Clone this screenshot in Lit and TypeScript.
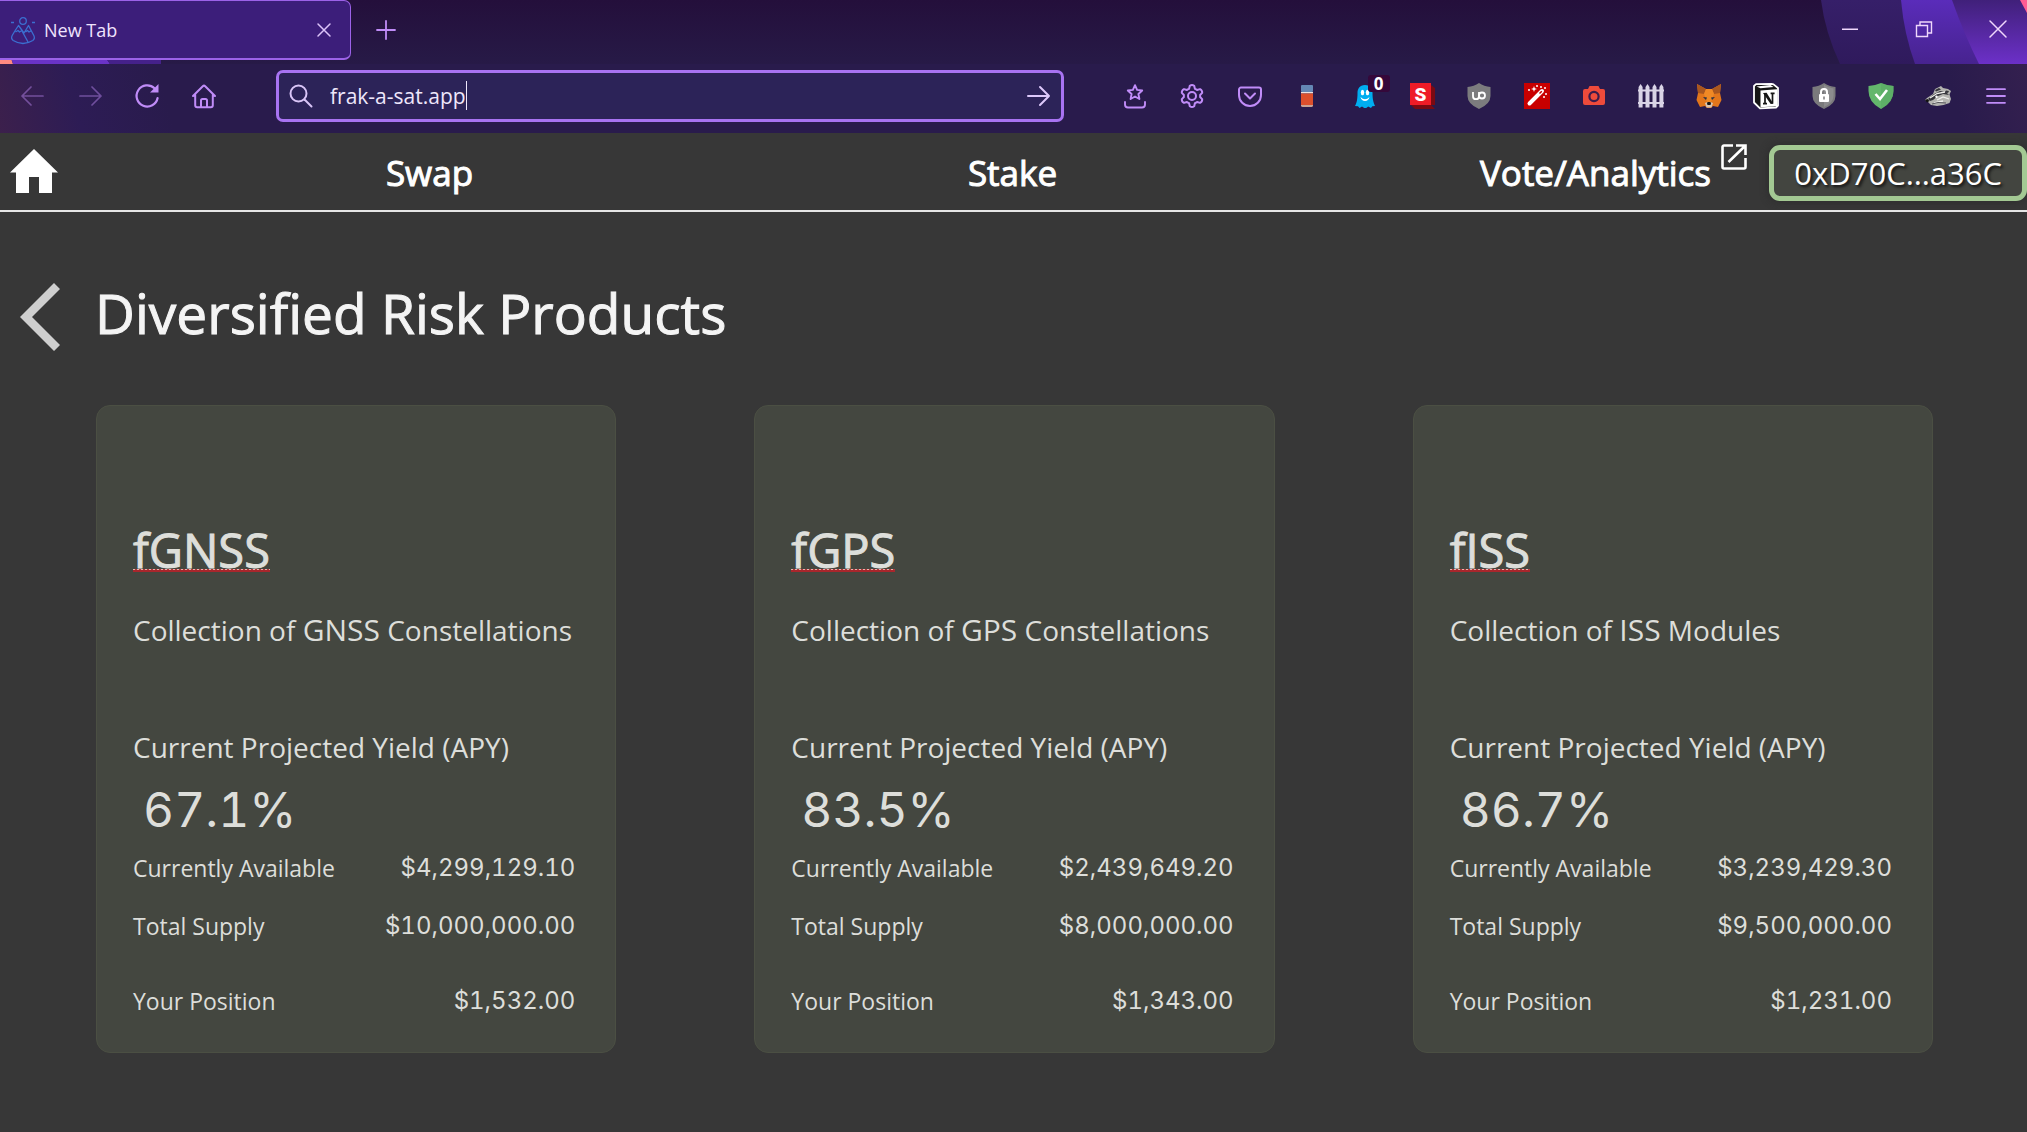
import { LitElement, html, css, svg, TemplateResult } from "lit";
import { customElement, property } from "lit/decorators.js";

interface Product {
  name: string;
  lead: string;
  code: string;
  tail: string;
  apy: string;
  available: string;
  supply: string;
  position: string;
}

const PRODUCTS: Product[] = [
  { name: "fGNSS", lead: "Collection of ", code: "GNSS", tail: " Constellations", apy: "67.1%", available: "$4,299,129.10", supply: "$10,000,000.00", position: "$1,532.00" },
  { name: "fGPS", lead: "Collection of ", code: "GPS", tail: " Constellations", apy: "83.5%", available: "$2,439,649.20", supply: "$8,000,000.00", position: "$1,343.00" },
  { name: "fISS", lead: "Collection of ", code: "ISS", tail: " Modules", apy: "86.7%", available: "$3,239,429.30", supply: "$9,500,000.00", position: "$1,231.00" },
];

const line = (body: TemplateResult, width = 2) => svg`<g fill="none" stroke="currentColor" stroke-width=${width} stroke-linecap="round" stroke-linejoin="round">${body}</g>`;

const ICONS: Record<string, TemplateResult> = {
  back: line(svg`<path d="M23 13H2M11 4 2 13l9 9"/>`, 1.7),
  forward: line(svg`<path d="M3 13h21M15 4l9 9-9 9"/>`, 1.7),
  reload: svg`<path d="M23.6 15A10.600 10.600 0 1 1 20.500 5.300" fill="none" stroke="currentColor" stroke-width="2.2" stroke-linecap="round"/><path d="M24.5 1v8.5H16z" fill="currentColor"/>`,
  home: line(svg`<path d="M2 13 11.8 3.2a1.7 1.7 0 0 1 2.4 0L24 13M4.2 11v11.2a2 2 0 0 0 2 2h13.6a2 2 0 0 0 2-2V11M10 24v-6.500a1.500 1.500 0 0 1 1.500-1.500h3a1.500 1.500 0 0 1 1.500 1.500V24"/>`, 2),
  search: line(svg`<circle cx="10.500" cy="10.500" r="8"/><path d="m16.500 16.500 7 7"/>`, 2),
  go: line(svg`<path d="M2 13h21M14 4l9 9-9 9"/>`, 2),
  starTray: line(svg`<path d="m13 2.200 2.100 4.700 5.100.6-3.800 3.500 1 5-4.400-2.500L8.600 16l1-5-3.800-3.500 5.100-.6zM3 19v2.500a3 3 0 0 0 3 3h14a3 3 0 0 0 3-3V19"/>`, 1.9),
  gear: line(svg`<circle cx="13" cy="13" r="4"/><path d="M10.800 2.800q2.200-1.600 4.400 0l.7 2.900q1.300.5 2.200 1.300l2.900-.9q2.400 1.100 2.200 3.800L21.100 12q.2 1 0 2l2.100 2.100q.2 2.700-2.200 3.800l-2.900-.9q-.9.800-2.200 1.300l-.7 2.900q-2.200 1.600-4.400 0l-.7-2.900q-1.300-.5-2.200-1.300L5 19.900q-2.400-1.100-2.200-3.800L4.900 14q-.2-1 0-2L2.800 9.900Q2.600 7.200 5 6.100l2.900.9q.9-.8 2.200-1.300z"/>`, 2),
  pocket: line(svg`<path d="M4 4.500h18a2 2 0 0 1 2 2V12a11 11 0 0 1-22 0V6.500a2 2 0 0 1 2-2zM8 10.500l5 5 5-5"/>`, 2),
  eraser: svg`<rect x="7" y="2" width="12" height="7" rx="1" fill="#6487b4"/><path d="M7 9h12v1.500H7z" fill="#efe2df"/><path d="M7 10.500h12V22a1 1 0 0 1-1 1H8a1 1 0 0 1-1-1z" fill="#dc4f2c"/><path d="M7 22h12v1q-.5 1-1.500 1h-9Q7.500 24 7 23z" fill="#c9a394"/>`,
  ghost: svg`<path d="M13 2C7.500 2 5.500 6 5.500 10c0 6-.6 9.500-2.500 13l3 .3 1.500 1.700 2.500-1.500 2.200 1.500h2l2-1.500 2.800 1.500 1.300-1.800 2.700-.2c-1.700-4-2.500-7-2.500-13 0-4-2-8-7.500-8z" fill="#00aef0"/><ellipse cx="10.500" cy="9.500" rx="1.700" ry="2.800" fill="#fff"/><ellipse cx="15.500" cy="9.500" rx="1.700" ry="2.800" fill="#fff"/><path d="M8.500 14q4.500 4.500 9 0-1 4-4.500 4t-4.500-4z" fill="#fff"/>`,
  letterS: svg`<path d="M5 22h21V5l-4-3v20l4 4H6l-4-4z" fill="#7a0a12"/><path d="M1 0h21v22H1z" fill="#ee1c27"/><text x="11.500" y="18" text-anchor="middle" font-family="Roboto, sans-serif" font-weight="900" font-size="19" fill="#fff">S</text>`,
  ublock: svg`<path d="M13 0q5 3.500 11.500 4v9q0 8-11.500 13Q1.500 21 1.500 13V4Q8 3.500 13 0z" fill="#7c7c7e"/><path d="M7 9v4.200a3 3 0 0 0 6 0V9" fill="none" stroke="#fff" stroke-width="1.800"/><circle cx="16" cy="12.500" r="3" fill="none" stroke="#fff" stroke-width="1.800"/>`,
  wand: svg`<path d="M0 0h26v26H0z" fill="#c80000"/><path d="M5.500 20.500 18 8" stroke="#fff" stroke-width="4" stroke-linecap="round"/><path d="m15.500 10.500 2.300-2.300" stroke="#c80000" stroke-width="1.500"/><g fill="#fff"><circle cx="5" cy="7" r="1"/><path d="m10 3 .8 2.200L13 6l-2.200.8L10 9l-.8-2.200L7 6l2.200-.8z"/><circle cx="13" cy="3" r="1"/><circle cx="17" cy="4" r="1"/><circle cx="21" cy="5" r="1"/><circle cx="22" cy="11" r="1"/><circle cx="20" cy="14" r="1"/></g>`,
  camera: svg`<path d="M8.500 3h9l1.500 3h3a2 2 0 0 1 2 2v12a2 2 0 0 1-2 2H4a2 2 0 0 1-2-2V8a2 2 0 0 1 2-2h3z" fill="#ee4b3b"/><circle cx="13" cy="13.500" r="4.600" fill="none" stroke="#3b1c4c" stroke-width="2.200"/>`,
  fence: svg`<g fill="#d9d4e6"><path d="M.6 24.500V4l2-3 2 3v20.500zM7.500 24.500V4l2-3 2 3v20.500zM14.500 24.500V4l2-3 2 3v20.500zM21.400 24.500V4l2-3 2 3v20.500z"/><path d="M0 6.500h26v2H0zM0 19h26v2H0z"/></g>`,
  fox: svg`<path d="m1 1 9 5h6l9-5-1 9 1.500 7L22 24l-5-1-2 2h-4l-2-2-5 1-3.500-7L2 10z" fill="#e2761b"/><path d="m1 1 9 5-2 5-6-1zM25 1l-9 5 2 5 6-1z" fill="#a9571f"/><path d="m10 6-2 5 3 8h4l3-8-2-5z" fill="#f08a25"/><path d="m7 14 4 .5-1 2.500zM19 14l-4 .5 1 2.500z" fill="#293044"/><path d="m9 20 2.500-1h3l2.500 1-1.500 4.500h-5z" fill="#d8c4b0"/><path d="m11 20.500.5-1.500h3l.5 1.500-.5 1.500h-3z" fill="#161616"/>`,
  notion: svg`<path d="M3 1.200 18.500.8l2 .6L25 5v17.500l-2 2L7 25.300 1 19.500V3z" fill="#151515" stroke="#fff" stroke-width="1.800" stroke-linejoin="round"/><path d="M7.500 7.500 24 6.300v17L7.500 24.200z" fill="#fff"/><path d="m3.500 3.500 14-1.500 3 2-13 1.200z" fill="#fff"/><path d="M10 20.700h4M12 20.700V11M19.500 20.500V10.300M17.600 10.300h4" stroke="#151515" stroke-width="1.700"/><path d="m10 10 3.600-.2 6.700 11-2.600.2z" fill="#151515"/>`,
  lock: svg`<path d="M13 0q5 3.500 11.500 4v9q0 8-11.500 13Q1.500 21 1.500 13V4Q8 3.500 13 0z" fill="#7a7a7c"/><path d="M13 2q5 3 9.500 3.500V13q0 6.500-9.500 11z" fill="#8c8c8e"/><rect x="8" y="11" width="10" height="8" rx="1" fill="#fff"/><path d="M10 11.500V9a3 3 0 0 1 6 0v2.500" fill="none" stroke="#fff" stroke-width="2"/><path d="M13 13.500v3" stroke="#7a7a7c" stroke-width="1.500"/>`,
  guard: svg`<path d="M13 0q6 2.600 12.500 3v5q0 11.500-12.500 18Q.5 19.500.5 8V3Q7 2.600 13 0z" fill="#63b76c"/><path d="M13 0q6 2.600 12.500 3v5q0 11.500-12.500 18z" fill="#57a862" opacity=".5"/><path d="m7.500 11 4.500 5 7-9" fill="none" stroke="#fff" stroke-width="2.600"/>`,
  badger: svg`<path d="m0 17 2-2 6-4 2-5 6-3 2 2 5 1 3 2-1.500 3.500L26 16l-1.500 4-6 2L12 23l-6-1-3-3z" fill="#b4b4b0"/><path d="m3 16 6-5 6-3 6 1 3 3-6-1-5 2-5 4-3 1zM10 7l4-2 2 1.500-5 2zM21 7.500l3 .5-1 2-3-1z" fill="#34343a"/><path d="m0 17 2.500-1 2 2-2.500 1.500z" fill="#111"/><path d="m5 15 7-4.500 8-1.500M12 17l6-3 6 2M9 20l9-2" fill="none" stroke="#efefec" stroke-width="1.300"/><circle cx="11.500" cy="13.800" r="1.200" fill="#fff"/><path d="m7 21 6-1.500 8 .5" fill="none" stroke="#55555a"/>`,
  menu: line(svg`<path d="M4 6.200h18M4 13h18M4 19.800h18"/>`, 1.8),
  peaks: svg`<g fill="none" stroke="#3b6fd0" stroke-width="1.300" stroke-linejoin="round"><circle cx="13" cy="4" r="3.300"/><path d="M5.500 13 2.200 18.500a4 4 0 0 0 1 5Q13 29.500 22.800 23.500a4 4 0 0 0 1-5L18.500 8.500 14 16 8.500 8.500zM5.500 15l2.500-1.500 1.500 1.500 2.500-1.500M15.500 15l2-1.500 1.500 1.500 2.500-1.500M12 14l6 11"/><path d="M1 5.500h3M22 5.500h3"/></g>`,
  close: line(svg`<path d="m7 7 12 12M19 7 7 19"/>`, 1.5),
  plus: line(svg`<path d="M13 4v18M4 13h18"/>`, 1.8),
  minimize: svg`<path d="M5 12.500h16v1.500H5z" fill="currentColor"/>`,
  restore: svg`<path d="M5.500 9.500h11v11h-11zM9 9V6h11.500v11H17" fill="none" stroke="currentColor" stroke-width="1.400"/>`,
  exit: line(svg`<path d="m5 5 16 16M21 5 5 21"/>`, 1.5),
};

@customElement("line-icon")
export class LineIcon extends LitElement {
  @property() name = "menu";

  static styles = css`
    :host { display: block; width: 26px; height: 26px; }
    .glyph { display: block; width: 100%; height: 100%; overflow: visible; }
  `;

  render() {
    return html`<svg class="glyph" viewBox="0 0 26 26" aria-hidden="true">${ICONS[this.name]}</svg>`;
  }
}

const buttonReset = css`
  button { display: block; margin: 0; padding: 0; border: 0; background: none; color: inherit; font: inherit; cursor: pointer; }
`;

@customElement("browser-chrome")
export class BrowserChrome extends LitElement {
  static styles = [
    buttonReset,
    css`
      :host { display: block; color: #c08cf8; font-family: "Open Sans", "Noto Sans", sans-serif; }
      .strip { position: relative; display: flex; align-items: flex-start; height: 64px; background: linear-gradient(#240f3b, #271a47); }
      .art { position: absolute; top: 0; height: 64px; }
      .art-left { left: 0; width: 170px; }
      .art-right { right: 0; width: 240px; }
      .tab { position: relative; display: flex; align-items: center; box-sizing: border-box; width: 351px; height: 60px; padding: 0 13px 0 10px; gap: 8px; border: 1px solid #9c62e8; border-bottom-width: 2px; border-left: 0; border-radius: 0 7px 7px 0; background: #3c1e7a; color: #efe3fd; font-size: 18px; }
      .tab-label { flex: 1; }
      .tab-close { color: #dcc4fa; }
      .new-tab { position: relative; margin: 17px 0 0 22px; }
      .window { position: relative; display: flex; gap: 48px; margin: 16px 16px 0 auto; color: #f0d8fc; }
      .toolbar { display: grid; grid-template-columns: 276px 9fr 11fr; align-items: center; box-sizing: border-box; height: 69px; padding-bottom: 6px; background: linear-gradient(75deg, #3c204c 0, #2d1c55 80px, #291b4c 170px, #291b4c 96%, #34204f 100%); }
      .moves { display: flex; gap: 31px; padding-left: 20px; }
      .dim { opacity: 0.45; }
      .address { display: flex; align-items: center; box-sizing: border-box; height: 52px; padding: 0 9px; border: 3px solid #a873f2; border-radius: 7px; background: #2c2358; }
      .address-icon { flex: none; color: #d9c5f7; }
      .url { flex: none; field-sizing: content; margin: 0 0 0 16px; padding: 0; border: 0; outline: 0; background: none; color: #eee6fb; font-family: inherit; font-size: 21px; line-height: 30px; }
      .caret { width: 1px; height: 29px; background: #eee6fb; }
      .go { margin-left: auto; color: #dcc8fa; }
      .extensions { display: flex; justify-content: space-between; padding: 0 18px 0 58px; }
      .extension { position: relative; }
      .count { position: absolute; left: 16px; bottom: 17px; width: 22px; height: 17px; border-radius: 3px; background: #35083a; color: #fff; font-size: 17px; line-height: 17px; font-weight: 700; text-align: center; }
    `,
  ];

  private extensions: [string, string][] = [
    ["starTray", "Bookmarks"], ["gear", "Settings"], ["pocket", "Save to Pocket"], ["eraser", "Eraser"],
    ["ghost", "Tracker blocker"], ["letterS", "S extension"], ["ublock", "Ad blocker"], ["wand", "Magic wand"],
    ["camera", "Capture"], ["fence", "Fence"], ["fox", "Wallet"], ["notion", "Notes"],
    ["lock", "Privacy"], ["guard", "Guard"], ["badger", "Badger"], ["menu", "Menu"],
  ];

  render() {
    return html`
      <div class="strip">
        <svg class="art art-left" viewBox="0 0 170 64" aria-hidden="true">
          <path d="M0 58h11l2 6H0z" fill="#ff8a80" />
          <path d="M11 58h95l4 6H13z" fill="#6a33c6" />
          <path d="M106 58h55v6h-51z" fill="#45218a" />
        </svg>
        <svg class="art art-right" viewBox="0 0 240 64" aria-hidden="true">
          <defs>
            <linearGradient id="deep" x2="0" y2="1"><stop stop-color="#361f69" /><stop offset="1" stop-color="#2f1a5c" /></linearGradient>
            <linearGradient id="mid" x2="0" y2="1"><stop stop-color="#5a2cba" /><stop offset="1" stop-color="#47238f" /></linearGradient>
            <linearGradient id="hot" x2="0" y2="1"><stop stop-color="#40207a" /><stop offset="1" stop-color="#6c30c8" /></linearGradient>
          </defs>
          <path d="M34 0Q38 32 53 64H240V0z" fill="url(#deep)" />
          <path d="M114 0Q117 34 128 64H240V0z" fill="url(#mid)" />
          <path d="M165 0Q177 34 192 64H240V0z" fill="url(#hot)" />
          <path d="M233 0h7v13z" fill="#ff5c94" />
        </svg>
        <div class="tab">
          <line-icon name="peaks"></line-icon>
          <span class="tab-label">New Tab</span>
          <button class="tab-close" aria-label="Close tab"><line-icon name="close"></line-icon></button>
        </div>
        <button class="new-tab" aria-label="Open a new tab"><line-icon name="plus"></line-icon></button>
        <div class="window">
          <button aria-label="Minimize"><line-icon name="minimize"></line-icon></button>
          <button aria-label="Restore"><line-icon name="restore"></line-icon></button>
          <button aria-label="Close"><line-icon name="exit"></line-icon></button>
        </div>
      </div>
      <div class="toolbar">
        <div class="moves">
          <button class="dim" aria-label="Back"><line-icon name="back"></line-icon></button>
          <button class="dim" aria-label="Forward"><line-icon name="forward"></line-icon></button>
          <button aria-label="Reload"><line-icon name="reload"></line-icon></button>
          <button aria-label="Home"><line-icon name="home"></line-icon></button>
        </div>
        <div class="address">
          <line-icon class="address-icon" name="search"></line-icon>
          <input class="url" type="text" aria-label="Address" .value=${"frak-a-sat.app"} />
          <span class="caret"></span>
          <button class="go" aria-label="Go"><line-icon name="go"></line-icon></button>
        </div>
        <div class="extensions">
          ${this.extensions.map(([icon, label]) => html`
            <button class="extension" aria-label=${label}>
              <line-icon name=${icon}></line-icon>
              ${icon === "ghost" ? html`<span class="count">0</span>` : null}
            </button>`)}
        </div>
      </div>
    `;
  }
}

@customElement("product-card")
export class ProductCard extends LitElement {
  @property({ attribute: false }) product!: Product;

  static styles = css`
    :host { display: block; box-sizing: border-box; padding: 114px 40px 33px 36px; border: 1px solid #4b4f43; border-radius: 14px; background: #444740; color: #dddeda; font-family: "Open Sans", "Noto Sans", sans-serif; }
    .name { position: relative; width: fit-content; margin: 0; font-size: 47px; line-height: 60px; font-weight: 400; -webkit-text-stroke: 1px #dddeda; }
    .name::after { content: ""; position: absolute; left: 0; right: 0; bottom: 8px; height: 3px; background: repeating-linear-gradient(90deg, #e9b3ad 0 2px, #b0383a 2px 4px) top / 100% 1px no-repeat, #a8262c; }
    .about { margin: 30px 0 0; font-size: 28px; line-height: 40px; white-space: nowrap; }
    .code { font-size: 30px; line-height: 1; }
    .caption { margin: 77px 0 0; font-size: 28px; line-height: 40px; }
    .apy { margin: 15px 0 0; padding-left: 10px; font-family: Inter, "DejaVu Sans", sans-serif; font-size: 48px; line-height: 56px; font-variant-numeric: tabular-nums; }
    .facts { display: grid; gap: 22px; margin: 12px 0 0; font-size: 23px; line-height: 36px; }
    .fact { display: flex; justify-content: space-between; }
    .own { margin-top: 17px; }
    .amount { margin: 0; font-family: Inter, "DejaVu Sans", sans-serif; font-size: 24px; font-variant-numeric: tabular-nums; }
  `;

  render() {
    const p = this.product;
    return html`
      <h2 class="name">${p.name}</h2>
      <p class="about">${p.lead}<span class="code">${p.code}</span>${p.tail}</p>
      <p class="caption">Current Projected Yield (APY)</p>
      <p class="apy">${p.apy}</p>
      <dl class="facts">
        <div class="fact"><dt>Currently Available</dt><dd class="amount">${p.available}</dd></div>
        <div class="fact"><dt>Total Supply</dt><dd class="amount">${p.supply}</dd></div>
        <div class="fact own"><dt>Your Position</dt><dd class="amount">${p.position}</dd></div>
      </dl>
    `;
  }
}

@customElement("app-root")
export class AppRoot extends LitElement {
  static styles = [
    buttonReset,
    css`
      :host { display: block; min-height: 100vh; background: #373737; font-family: "Open Sans", "Noto Sans", sans-serif; }
      .site-nav { display: grid; grid-template-columns: 138px 1fr 1fr 1fr 140px; align-items: center; box-sizing: border-box; height: 79px; padding-top: 2px; border-bottom: 2px solid #e6e6e6; color: #fff; font-size: 35px; line-height: 48px; }
      a { color: inherit; text-decoration: none; }
      .house { width: 48px; margin: 0 0 4px 10px; }
      .house-glyph, .chevron, .out { display: block; }
      .page-link { position: relative; justify-self: center; -webkit-text-stroke: 1px #fff; }
      .out { position: absolute; left: 100%; top: -5px; margin-left: 10px; }
      .wallet { justify-self: end; box-sizing: border-box; height: 56px; padding: 0 20px; border: 5px solid #a3c993; border-radius: 11px; background: #434540; color: #fff; font-size: 31px; line-height: 46px; text-shadow: 2px 2px 3px #111; box-shadow: 0 0 8px #2a2a2a; white-space: nowrap; }
      .heading { display: flex; align-items: center; gap: 35px; padding: 63px 20px 0; }
      .back { padding-top: 8px; }
      .title { margin: 0; color: #f4f4f4; font-size: 55px; line-height: 72px; font-weight: 400; -webkit-text-stroke: 1px #f4f4f4; }
      .cards { display: grid; grid-template-columns: repeat(3, minmax(0, 1fr)); gap: 138px; padding: 54px 94px 79px 96px; }
    `,
  ];

  render() {
    return html`
      <browser-chrome></browser-chrome>
      <nav class="site-nav">
        <a class="house" href="#home" aria-label="Home">
          <svg class="house-glyph" width="48" height="44" viewBox="0 0 48 44" aria-hidden="true"><path d="M24 0 48 23.500h-6V44H29V28H19v16H6V23.500H0z" fill="#fff" /></svg>
        </a>
        <a class="page-link" href="#swap">Swap</a>
        <a class="page-link" href="#stake">Stake</a>
        <a class="page-link" href="#vote">Vote/Analytics<svg class="out" width="26" height="26" viewBox="0 0 26 26" aria-hidden="true"><path d="M12 1.500H3A1.500 1.500 0 0 0 1.500 3v20A1.500 1.500 0 0 0 3 24.500h20a1.500 1.500 0 0 0 1.500-1.500v-9M15 1.500h9.500V11M24 2 7.500 18" fill="none" stroke="#fff" stroke-width="2.600" /></svg></a>
        <button class="wallet">0xD70C…a36C</button>
      </nav>
      <main>
        <header class="heading">
          <button class="back" aria-label="Back to products">
            <svg class="chevron" width="40" height="68" viewBox="0 0 40 68" aria-hidden="true"><path d="M34 0 40 6 12 34l28 28-6 6L0 34z" fill="#cfcfcf" /></svg>
          </button>
          <h1 class="title">Diversified Risk Products</h1>
        </header>
        <section class="cards">
          ${PRODUCTS.map((p) => html`<product-card .product=${p}></product-card>`)}
        </section>
      </main>
    `;
  }
}
